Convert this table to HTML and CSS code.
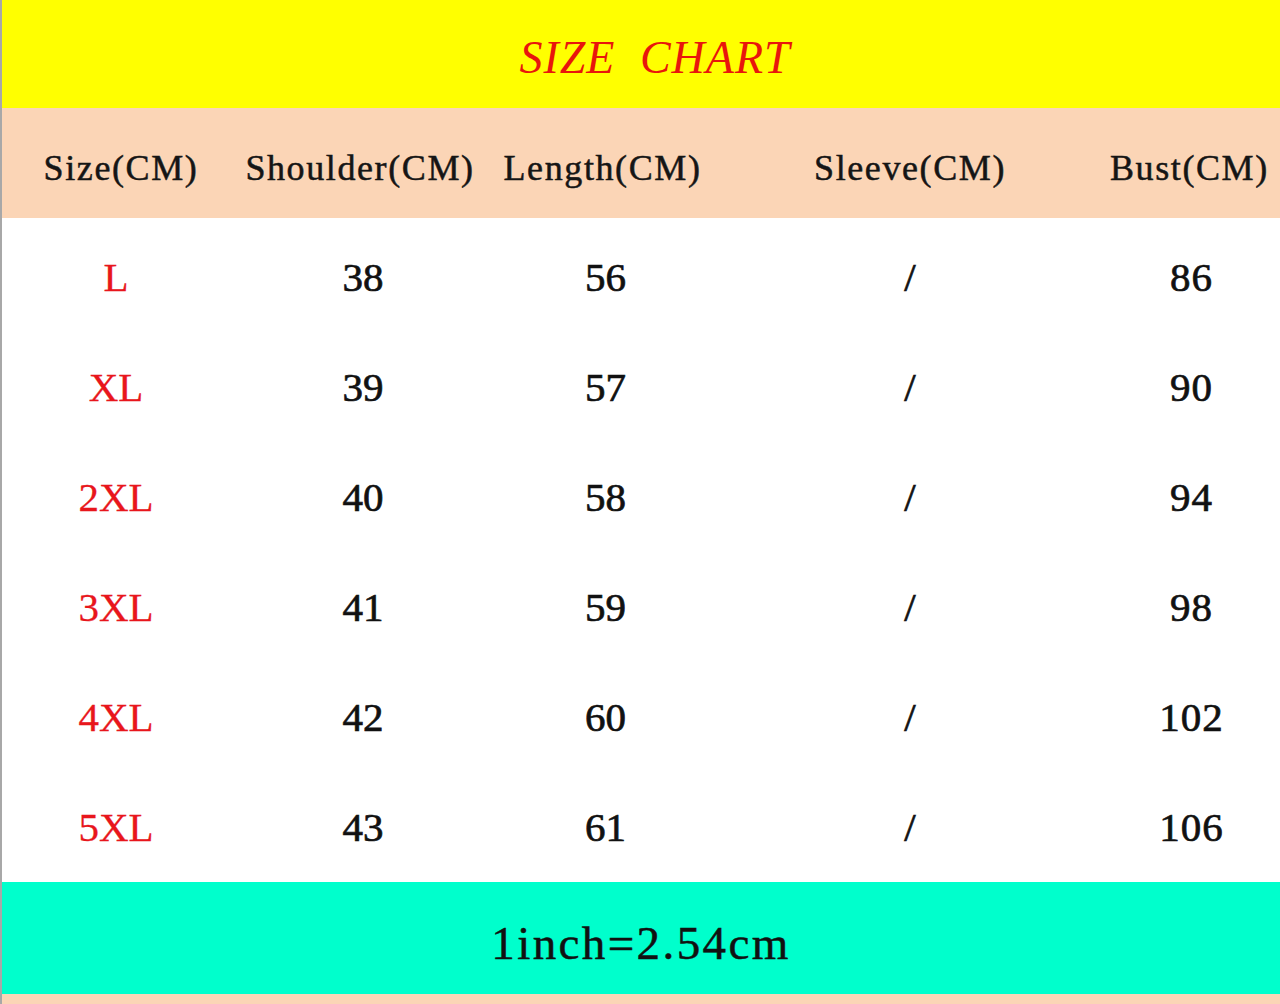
FILE: index.html
```html
<!DOCTYPE html>
<html>
<head>
<meta charset="utf-8">
<link rel="stylesheet" href="styles.css">
</head>
<body>
<div class="chart">
  <div class="title">SIZE CHART</div>
  <div class="row head">
    <div class="c c1">Size(CM)</div>
    <div class="c c2">Shoulder(CM)</div>
    <div class="c c3">Length(CM)</div>
    <div class="c c4">Sleeve(CM)</div>
    <div class="c c5">Bust(CM)</div>
  </div>
  <div class="body">
    <div class="row data"><div class="c c1 sz">L</div><div class="c c2">38</div><div class="c c3">56</div><div class="c c4">/</div><div class="c c5">86</div></div>
    <div class="row data"><div class="c c1 sz">XL</div><div class="c c2">39</div><div class="c c3">57</div><div class="c c4">/</div><div class="c c5">90</div></div>
    <div class="row data"><div class="c c1 sz">2XL</div><div class="c c2">40</div><div class="c c3">58</div><div class="c c4">/</div><div class="c c5">94</div></div>
    <div class="row data"><div class="c c1 sz">3XL</div><div class="c c2">41</div><div class="c c3">59</div><div class="c c4">/</div><div class="c c5">98</div></div>
    <div class="row data"><div class="c c1 sz">4XL</div><div class="c c2">42</div><div class="c c3">60</div><div class="c c4">/</div><div class="c c5">102</div></div>
    <div class="row data"><div class="c c1 sz">5XL</div><div class="c c2">43</div><div class="c c3">61</div><div class="c c4">/</div><div class="c c5">106</div></div>
  </div>
  <div class="foot">1inch=2.54cm</div>
  <div class="strip"></div>
</div>
</body>
</html>
```
FILE: styles.css
```css
html, body {
  margin: 0;
  padding: 0;
  background: #ffffff;
}
.chart {
  width: 1280px;
  height: 1004px;
  overflow: hidden;
  display: flex;
  flex-direction: column;
  border-left: 2px solid #a8a8a8;
  box-sizing: border-box;
}
.title {
  height: 108px;
  background: #ffff00;
  color: #e8160c;
  font-family: "Liberation Serif", serif;
  font-style: italic;
  font-size: 46px;
  letter-spacing: 1px;
  word-spacing: 12px;
  display: flex;
  align-items: center;
  justify-content: center;
  padding-left: 28px;
  padding-top: 6px;
  box-sizing: border-box;
}
.row {
  display: grid;
  grid-template-columns: 238px 240px 245px 370px 185px;
  align-items: center;
}
.c {
  text-align: center;
  white-space: nowrap;
}
.head {
  height: 110px;
  background: #fbd5b6;
  font-family: "Liberation Serif", serif;
  font-size: 36px;
  letter-spacing: 1.6px;
  color: #151515;
  -webkit-text-stroke: 0.5px #151515;
  padding-top: 10px;
  box-sizing: border-box;
}
.head .c5 {
  text-align: left;
  padding-left: 15px;
}
.body {
  display: flex;
  flex-direction: column;
  padding-top: 4px;
  height: 664px;
  box-sizing: border-box;
}
.data {
  height: 110.67px;
  font-family: "Liberation Serif", serif;
  font-size: 41px;
  color: #111;
  -webkit-text-stroke: 0.7px #111;
}
.data .c1 { padding-right: 10px; }
.data .c2 { padding-left: 6px; }
.data .c3 { padding-left: 6px; }
.data .c5 { padding-left: 8px; letter-spacing: 1px; }
.sz {
  color: #e8161c;
  -webkit-text-stroke: 0.3px #e8161c;
}
.foot {
  height: 112px;
  background: #00ffcc;
  font-family: "Liberation Serif", serif;
  font-size: 47px;
  letter-spacing: 2.4px;
  color: #111;
  -webkit-text-stroke: 0.5px #111;
  display: flex;
  align-items: center;
  justify-content: center;
  padding-top: 10px;
  box-sizing: border-box;
}
.strip {
  height: 10px;
  background: #fbd5b6;
}
```
